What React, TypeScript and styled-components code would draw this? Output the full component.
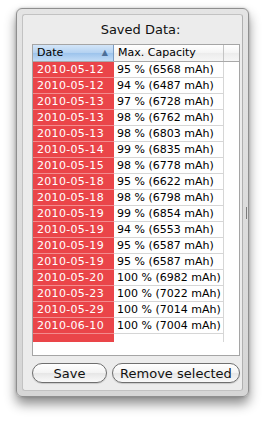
import React from 'react';
import styled, { createGlobalStyle } from 'styled-components';

const Global = createGlobalStyle`
  html, body { margin: 0; padding: 0; background: #fff; }
  body { font-family: 'DejaVu Sans', 'Liberation Sans', sans-serif; }
`;

const Page = styled.div`
  padding: 8px 15px 24px 16px;
  width: 264px;
  box-sizing: border-box;
`;

/* ─── drawer frame ─── */
const Drawer = styled.div`
  position: relative;
  width: 233px;
  height: 389px;
  box-sizing: border-box;
  border: 1px solid #8f8f8f;
  border-radius: 6px;
  background: linear-gradient(180deg, #e4e4e4, #d6d6d6);
  box-shadow: 0 7px 12px rgba(0, 0, 0, 0.45), 0 0 3px rgba(0, 0, 0, 0.2);
  padding: 5px 5px 5px 5px;
  display: flex;
`;

const Inner = styled.div`
  flex: 1;
  box-sizing: border-box;
  background: #ececec;
  border: 1px solid #c2c2c2;
  border-right-color: #b0b0b0;
  border-radius: 3px;
  padding: 7px 1px 6px 9px;
  display: flex;
  flex-direction: column;
`;

const Grip = styled.div`
  position: absolute;
  right: 1px;
  top: 198px;
  width: 1px;
  height: 12px;
  background: #7c7c7c;
`;

const Title = styled.div`
  font-size: 13px;
  line-height: 16px;
  color: #111;
  text-align: center;
  padding-left: 8px;
  margin-bottom: 6px;
`;

/* ─── table ─── */
const Table = styled.div`
  width: 208px;
  height: 312px;
  box-sizing: border-box;
  border: 1px solid #a5a5a5;
  background: #fff;
  display: flex;
  flex-direction: column;
  overflow: hidden;
`;

const HeadRow = styled.div`
  display: flex;
  height: 16px;
  border-bottom: 1px solid #a9a9a9;
  font-size: 11px;
  line-height: 16px;
  color: #000;
`;

const HeadCell = styled.div<{ $w: number; $sorted?: boolean }>`
  width: ${p => p.$w}px;
  box-sizing: border-box;
  padding: 0 4px;
  border-right: 1px solid ${p => (p.$sorted ? '#7a9cc4' : '#c4c4c4')};
  background: ${p =>
    p.$sorted
      ? 'linear-gradient(180deg, #d3e5f8 0%, #b3d1f1 50%, #9cc3ec 51%, #c3dcf6 100%)'
      : 'linear-gradient(180deg, #ffffff 0%, #f4f4f4 50%, #ececec 51%, #f6f6f6 100%)'};
  display: flex;
  justify-content: space-between;
  align-items: center;
  &:last-child { border-right: none; flex: 1; }
`;

const SortArrow = styled.span`
  font-size: 8px;
  color: #4d6e96;
  margin-right: 1px;
`;

const Body = styled.div`
  height: 280px;
  overflow: hidden;
`;

const Row = styled.div`
  display: flex;
  height: 16px;
  font-size: 11px;
  line-height: 15px;
`;

const DateCell = styled.div`
  width: 81px;
  box-sizing: border-box;
  padding-left: 4px;
  background: #ea4549;
  color: #fff;
  border-bottom: 1px solid #f38b8d;
  letter-spacing: 0.3px;
`;

const CapCell = styled.div`
  width: 110px;
  box-sizing: border-box;
  padding-left: 3px;
  color: #000;
  border-bottom: 1px solid #d6d6d6;
  border-right: 1px solid #d6d6d6;
  white-space: nowrap;
`;

const Footer = styled.div`
  flex: 1;
  background: #fff;
`;

/* ─── buttons ─── */
const Buttons = styled.div`
  display: flex;
  gap: 5px;
  margin-top: 7px;
`;

const Button = styled.button<{ $w: number }>`
  width: ${p => p.$w}px;
  height: 20px;
  box-sizing: border-box;
  border: 1px solid #6f6f6f;
  border-radius: 10px;
  background: linear-gradient(180deg, #ffffff 0%, #f3f3f3 50%, #e6e6e6 51%, #f9f9f9 100%);
  box-shadow: 0 1px 1px rgba(0, 0, 0, 0.15);
  font-family: 'DejaVu Sans', 'Liberation Sans', sans-serif;
  font-size: 13px;
  line-height: 17px;
  color: #111;
  padding: 0;
  cursor: pointer;
`;

const ROWS: [string, string][] = [
  ['2010-05-12', '95 % (6568 mAh)'],
  ['2010-05-12', '94 % (6487 mAh)'],
  ['2010-05-13', '97 % (6728 mAh)'],
  ['2010-05-13', '98 % (6762 mAh)'],
  ['2010-05-13', '98 % (6803 mAh)'],
  ['2010-05-14', '99 % (6835 mAh)'],
  ['2010-05-15', '98 % (6778 mAh)'],
  ['2010-05-18', '95 % (6622 mAh)'],
  ['2010-05-18', '98 % (6798 mAh)'],
  ['2010-05-19', '99 % (6854 mAh)'],
  ['2010-05-19', '94 % (6553 mAh)'],
  ['2010-05-19', '95 % (6587 mAh)'],
  ['2010-05-19', '95 % (6587 mAh)'],
  ['2010-05-20', '100 % (6982 mAh)'],
  ['2010-05-23', '100 % (7022 mAh)'],
  ['2010-05-29', '100 % (7014 mAh)'],
  ['2010-06-10', '100 % (7004 mAh)'],
  ['', ''],
];

export default function App() {
  return (
    <Page>
      <Global />
      <Drawer>
        <Inner>
          <Title>Saved Data:</Title>
          <Table>
            <HeadRow>
              <HeadCell $w={81} $sorted>
                Date<SortArrow>▲</SortArrow>
              </HeadCell>
              <HeadCell $w={110}>Max. Capacity</HeadCell>
              <HeadCell $w={15} />
            </HeadRow>
            <Body>
              {ROWS.map(([d, c], i) => (
                <Row key={i}>
                  <DateCell>{d}</DateCell>
                  <CapCell>{c}</CapCell>
                </Row>
              ))}
            </Body>
            <Footer />
          </Table>
          <Buttons>
            <Button $w={75}>Save</Button>
            <Button $w={128}>Remove selected</Button>
          </Buttons>
        </Inner>
        <Grip />
      </Drawer>
    </Page>
  );
}
